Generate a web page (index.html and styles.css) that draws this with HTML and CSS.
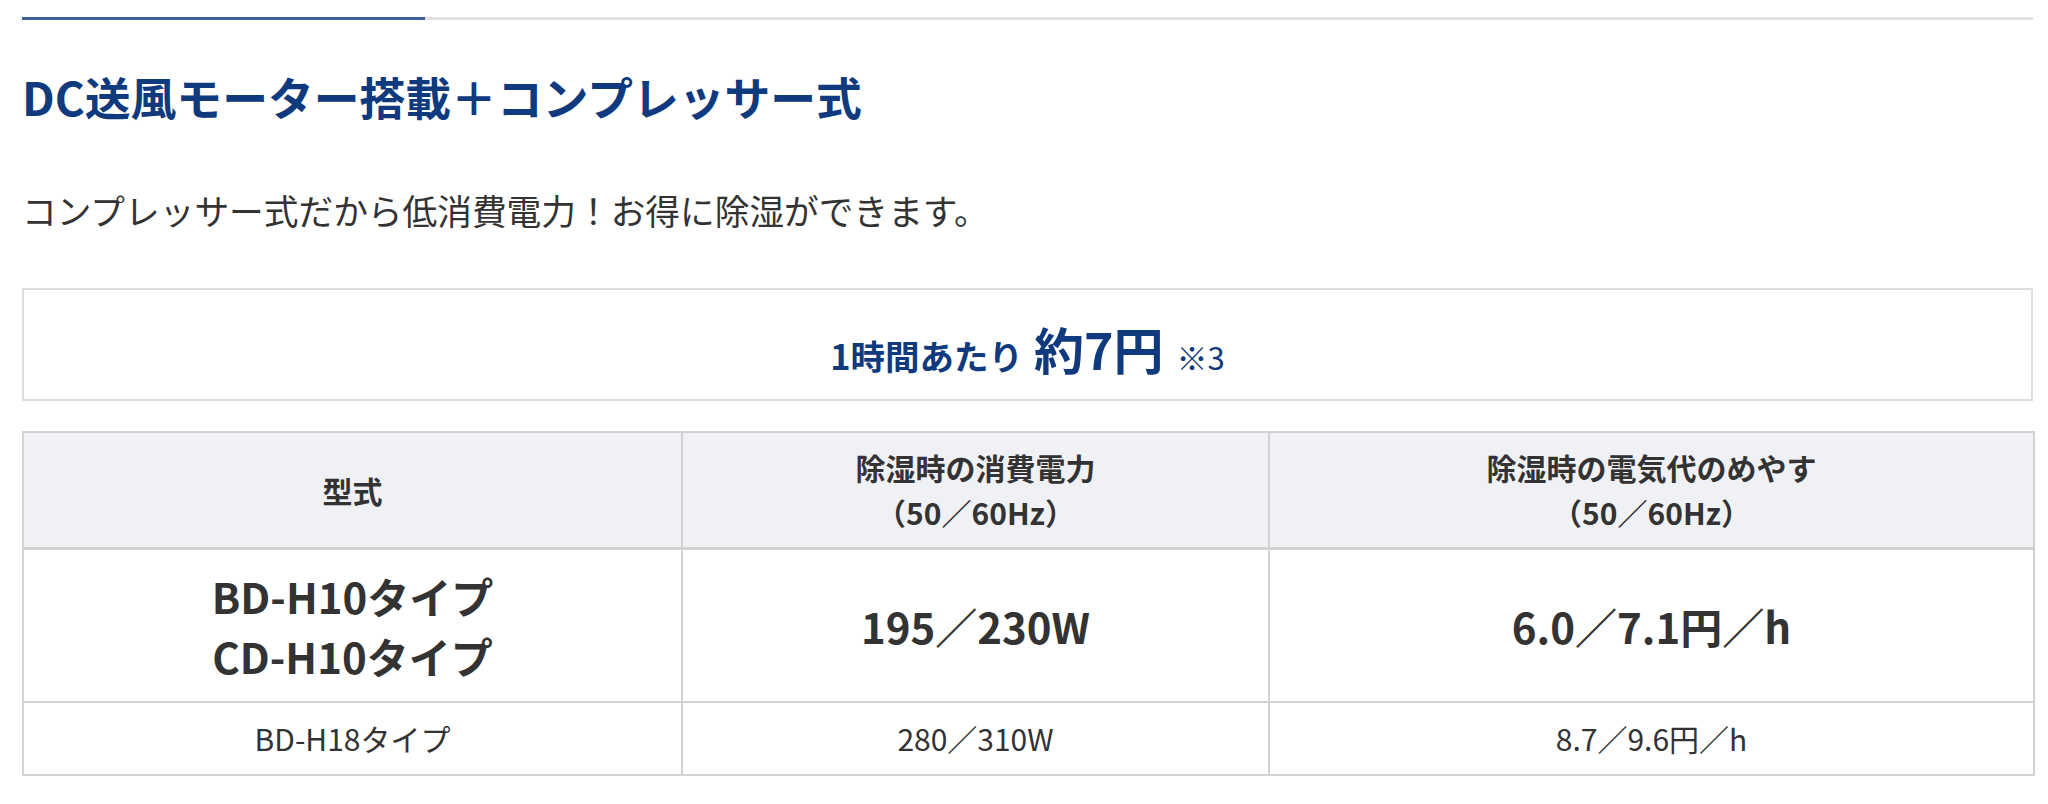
FILE: index.html
```html
<!DOCTYPE html>
<html lang="ja">
<head>
<meta charset="utf-8">
<link rel="stylesheet" href="styles.css">
</head>
<body>
<div class="page">
  <div class="rule"><div class="rule-accent"></div></div>
  <h2 class="title">DC送風モーター搭載＋コンプレッサー式</h2>
  <p class="lead">コンプレッサー式だから低消費電力！お得に除湿ができます。</p>
  <div class="cost-box">
    <p class="cost"><span class="cost-label">1時間あたり</span><span class="cost-value">約7円</span><span class="cost-note">※3</span></p>
  </div>
  <table class="spec">
    <colgroup>
      <col class="c1">
      <col class="c2">
      <col class="c3">
    </colgroup>
    <thead>
      <tr>
        <th>型式</th>
        <th>除湿時の消費電力<br>（50／60Hz）</th>
        <th>除湿時の電気代のめやす<br>（50／60Hz）</th>
      </tr>
    </thead>
    <tbody>
      <tr class="main-row">
        <td>BD-H10タイプ<br>CD-H10タイプ</td>
        <td>195／230W</td>
        <td>6.0／7.1円／h</td>
      </tr>
      <tr class="sub-row">
        <td>BD-H18タイプ</td>
        <td>280／310W</td>
        <td>8.7／9.6円／h</td>
      </tr>
    </tbody>
  </table>
</div>
</body>
</html>
```

FILE: styles.css
```css
html, body {
  margin: 0;
  padding: 0;
  background: #fff;
}
body {
  font-family: "Noto Sans CJK JP", "Noto Sans", sans-serif;
  color: #333;
}
.page {
  width: 2011px;
  padding: 17px 0 0 22px;
}
.rule {
  height: 3px;
  background: #e2e2e2;
}
.rule-accent {
  width: 403px;
  height: 3px;
  background: #3d5f9b;
}
.title {
  margin: 45px 0 0;
  font-size: 45.8px;
  line-height: 63px;
  font-weight: 700;
  color: #0f3a7e;
}
.lead {
  margin: 57px 0 0;
  font-size: 34.7px;
  line-height: 51px;
  font-weight: 400;
  color: #333;
}
.cost-box {
  margin-top: 52px;
  height: 109px;
  border: 2px solid #dedede;
  display: flex;
  align-items: center;
  justify-content: center;
}
.cost {
  margin: 0;
  color: #0f3a7e;
  font-weight: 700;
  line-height: 1;
  padding-top: 6px;
}
.cost-label {
  font-size: 34.5px;
}
.cost-value {
  font-size: 50px;
  margin-left: 11px;
}
.cost-note {
  font-size: 31px;
  font-weight: 400;
  margin-left: 13px;
}
.spec {
  margin-top: 30px;
  width: 2011px;
  border-collapse: collapse;
  table-layout: fixed;
}
.c1 { width: 659px; }
.c2 { width: 587px; }
.c3 { width: 765px; }
.spec th,
.spec td {
  border: 2px solid #d2d2d2;
  text-align: center;
  vertical-align: middle;
  color: #333;
}
.spec th {
  background: #f0f1f5;
  font-size: 30px;
  line-height: 45px;
  font-weight: 700;
  height: 114px;
  padding: 0;
  border-bottom-width: 3px;
}
.main-row td {
  font-size: 42px;
  line-height: 60px;
  font-weight: 700;
  height: 151px;
  padding: 0;
}
.sub-row td {
  font-size: 30px;
  line-height: 45px;
  font-weight: 400;
  height: 71px;
  padding: 0;
}
```
